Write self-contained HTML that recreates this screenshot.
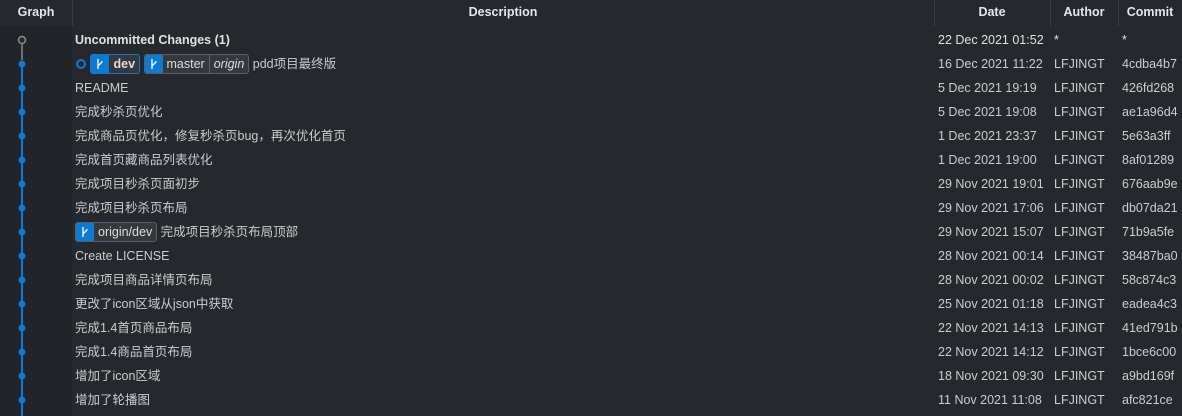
<!DOCTYPE html><html><head><style>
body{margin:0;width:1182px;height:416px;overflow:hidden;background:#25282d;font-family:"Liberation Sans","Noto Sans CJK SC",sans-serif;font-size:12.5px;color:#cccccc;position:relative}
.hdr{position:absolute;top:0;left:0;width:1182px;height:26px;background:#25282d;font-weight:bold;color:#e6e6e6}
.hdr div{position:absolute;top:0;height:26px;line-height:25px;text-align:center}
.sep{position:absolute;top:0;width:1px;height:26px;background:#3a3e44}
.gcol{position:absolute;left:0;top:26px;width:72px;height:390px;background:#212428}
.row{position:absolute;left:0;width:1182px;height:24px;line-height:24px;white-space:nowrap}
.row>span{position:absolute;top:0}
.d{left:938px}.a{left:1054px}.c{left:1122px}.t{left:75px}
.badge{display:inline-flex;height:18px;border:1px solid #5a5e64;border-radius:3px;vertical-align:middle;overflow:hidden;line-height:18px;background:#35383d;color:#ddd;margin-top:-2px}
.badge .ic{width:18px;background:#0e7ad1;color:#fff;display:flex;align-items:center;justify-content:center}
.badge .nm{padding:0 4px}
</style></head><body>
<div class="gcol"></div>
<div class="hdr">
<div style="left:0;width:72px">Graph</div>
<div style="left:72px;width:862px">Description</div>
<div style="left:934px;width:116px">Date</div>
<div style="left:1050px;width:68px">Author</div>
<div style="left:1118px;width:64px">Commit</div>
</div>
<div class="sep" style="left:72px"></div><div class="sep" style="left:934px"></div><div class="sep" style="left:1050px"></div><div class="sep" style="left:1118px"></div>
<svg style="position:absolute;left:0;top:0" width="72" height="416">
<line x1="22" y1="44" x2="22" y2="60" stroke="#888" stroke-width="1.5"/>
<line x1="22" y1="64" x2="22" y2="416" stroke="#0e7ad1" stroke-width="2"/>
<circle cx="22" cy="40" r="3.5" fill="#25282d" stroke="#8a8a8a" stroke-width="1.5"/>
<g fill="#0e7ad1">
<circle cx="22" cy="64" r="3.5"/><circle cx="22" cy="88" r="3.5"/><circle cx="22" cy="112" r="3.5"/><circle cx="22" cy="136" r="3.5"/><circle cx="22" cy="160" r="3.5"/><circle cx="22" cy="184" r="3.5"/><circle cx="22" cy="208" r="3.5"/><circle cx="22" cy="232" r="3.5"/><circle cx="22" cy="256" r="3.5"/><circle cx="22" cy="280" r="3.5"/><circle cx="22" cy="304" r="3.5"/><circle cx="22" cy="328" r="3.5"/><circle cx="22" cy="352" r="3.5"/><circle cx="22" cy="376" r="3.5"/><circle cx="22" cy="400" r="3.5"/></g>
</svg>
<div class="row" style="top:28px;font-weight:bold;color:#e0e0e0"><span class="t">Uncommitted Changes (1)</span><span class="d" style="font-weight:normal">22 Dec 2021 01:52</span><span class="a" style="font-weight:normal">*</span><span class="c" style="font-weight:normal">*</span></div>
<div class="row" style="top:52px"><span class="t"><svg width="12" height="12" style="vertical-align:middle;margin-top:-2px"><circle cx="6" cy="6" r="4" fill="none" stroke="#0e7ad1" stroke-width="2"/></svg> <span class="badge" style="border-color:#0e7ad1"><span class="ic"><svg width="10" height="12"><path d="M3 1v10M3 9c0-3 4-3 4-6" stroke="#fff" stroke-width="1.3" fill="none"/></svg></span><span class="nm" style="font-weight:bold">dev</span></span> <span class="badge"><span class="ic"><svg width="10" height="12"><path d="M3 1v10M3 9c0-3 4-3 4-6" stroke="#fff" stroke-width="1.3" fill="none"/></svg></span><span class="nm">master</span><span class="nm" style="border-left:1px solid #5a5e64;font-style:italic">origin</span></span> pdd项目最终版</span><span class="d">16 Dec 2021 11:22</span><span class="a">LFJINGT</span><span class="c">4cdba4b7</span></div>
<div class="row" style="top:76px"><span class="t">README</span><span class="d">5 Dec 2021 19:19</span><span class="a">LFJINGT</span><span class="c">426fd268</span></div>
<div class="row" style="top:100px"><span class="t">完成秒杀页优化</span><span class="d">5 Dec 2021 19:08</span><span class="a">LFJINGT</span><span class="c">ae1a96d4</span></div>
<div class="row" style="top:124px"><span class="t">完成商品页优化，修复秒杀页bug，再次优化首页</span><span class="d">1 Dec 2021 23:37</span><span class="a">LFJINGT</span><span class="c">5e63a3ff</span></div>
<div class="row" style="top:148px"><span class="t">完成首页藏商品列表优化</span><span class="d">1 Dec 2021 19:00</span><span class="a">LFJINGT</span><span class="c">8af01289</span></div>
<div class="row" style="top:172px"><span class="t">完成项目秒杀页面初步</span><span class="d">29 Nov 2021 19:01</span><span class="a">LFJINGT</span><span class="c">676aab9e</span></div>
<div class="row" style="top:196px"><span class="t">完成项目秒杀页布局</span><span class="d">29 Nov 2021 17:06</span><span class="a">LFJINGT</span><span class="c">db07da21</span></div>
<div class="row" style="top:220px"><span class="t"><span class="badge"><span class="ic"><svg width="10" height="12"><path d="M3 1v10M3 9c0-3 4-3 4-6" stroke="#fff" stroke-width="1.3" fill="none"/></svg></span><span class="nm">origin/dev</span></span> 完成项目秒杀页布局顶部</span><span class="d">29 Nov 2021 15:07</span><span class="a">LFJINGT</span><span class="c">71b9a5fe</span></div>
<div class="row" style="top:244px"><span class="t">Create LICENSE</span><span class="d">28 Nov 2021 00:14</span><span class="a">LFJINGT</span><span class="c">38487ba0</span></div>
<div class="row" style="top:268px"><span class="t">完成项目商品详情页布局</span><span class="d">28 Nov 2021 00:02</span><span class="a">LFJINGT</span><span class="c">58c874c3</span></div>
<div class="row" style="top:292px"><span class="t">更改了icon区域从json中获取</span><span class="d">25 Nov 2021 01:18</span><span class="a">LFJINGT</span><span class="c">eadea4c3</span></div>
<div class="row" style="top:316px"><span class="t">完成1.4首页商品布局</span><span class="d">22 Nov 2021 14:13</span><span class="a">LFJINGT</span><span class="c">41ed791b</span></div>
<div class="row" style="top:340px"><span class="t">完成1.4商品首页布局</span><span class="d">22 Nov 2021 14:12</span><span class="a">LFJINGT</span><span class="c">1bce6c00</span></div>
<div class="row" style="top:364px"><span class="t">增加了icon区域</span><span class="d">18 Nov 2021 09:30</span><span class="a">LFJINGT</span><span class="c">a9bd169f</span></div>
<div class="row" style="top:388px"><span class="t">增加了轮播图</span><span class="d">11 Nov 2021 11:08</span><span class="a">LFJINGT</span><span class="c">afc821ce</span></div>
</body></html>
